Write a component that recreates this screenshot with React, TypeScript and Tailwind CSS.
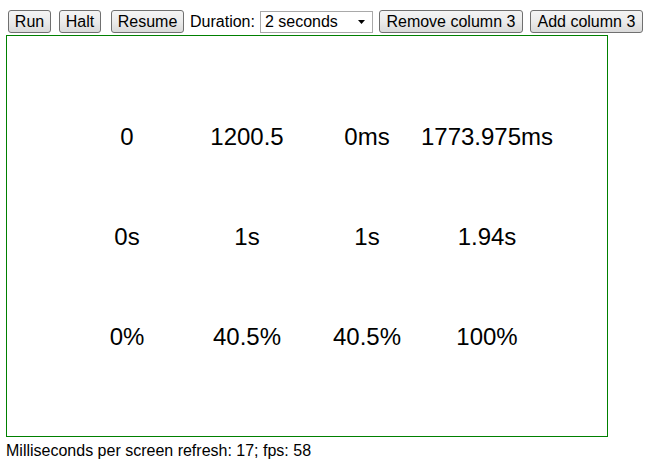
import React from "react";

const btn =
  "h-[23px] px-[6px] border border-[#707070] rounded-[3px] bg-gradient-to-b from-[#f4f4f4] via-[#ebebeb] to-[#dadada] text-[16px] leading-none text-black flex items-center justify-center shrink-0";

const rows = [
  ["0", "1200.5", "0ms", "1773.975ms"],
  ["0s", "1s", "1s", "1.94s"],
  ["0%", "40.5%", "40.5%", "100%"],
];

export default function App() {
  return (
    <div
      className="w-[656px] h-[467px] bg-white text-black overflow-hidden"
      style={{ fontFamily: '"Liberation Sans", Arial, sans-serif' }}
    >
      <div className="flex items-center pt-[10px] h-[33px]">
        <button className={`${btn} ml-[8px] w-[43px]`}>Run</button>
        <button className={`${btn} ml-[8px] w-[42px]`}>Halt</button>
        <button className={`${btn} ml-[10px] w-[73px]`}>Resume</button>
        <span className="ml-[6px] text-[16px] leading-none">Duration:</span>
        <div className="ml-[5px] w-[113px] h-[22px] border border-[#a9a9a9] bg-white flex items-center justify-between pl-[4px] pr-[6px] text-[16px] leading-none shrink-0">
          <span>2 seconds</span>
          <svg width="8" height="4" viewBox="0 0 8 4">
            <path d="M0 0H7L3.5 4Z" fill="#000" />
          </svg>
        </div>
        <button className={`${btn} ml-[6px] w-[144px]`}>Remove column 3</button>
        <button className={`${btn} ml-[7px] w-[113px]`}>Add column 3</button>
      </div>
      <div className="ml-[6px] mt-[2px] w-[602px] h-[402px] border border-[#008000] flex items-center justify-center">
        <div className="grid grid-cols-[repeat(4,120px)] grid-rows-[repeat(3,100px)] pt-[2px]">
          {rows.flat().map((v, i) => (
            <div key={i} className="flex items-center justify-center text-[24px]">
              {v}
            </div>
          ))}
        </div>
      </div>
      <div className="ml-[6px] mt-[5px] text-[16px] leading-[18px]">
        Milliseconds per screen refresh: 17; fps: 58
      </div>
    </div>
  );
}
